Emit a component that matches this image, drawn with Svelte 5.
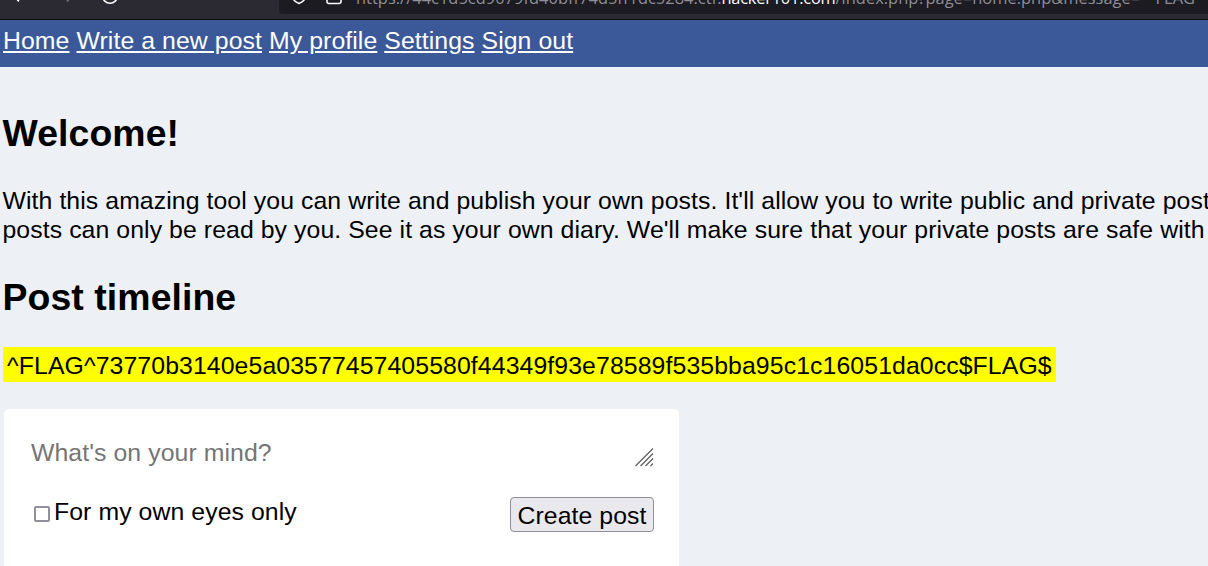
<script>
  const links = ['Home', 'Write a new post', 'My profile', 'Settings', 'Sign out'];
</script>

<div class="window">
  <header class="toolbar">
    <div class="buttons">
      <svg width="130" height="19" viewBox="0 0 130 19" fill="none" stroke-width="1.6">
        <path d="M10-8 15-2.500 19 1.300" stroke="#fbfbfe" />
        <path d="M71-8 71-2.500 67 1.300" stroke="#77757e" />
        <circle cx="110" cy="-4" r="7.300" stroke="#fbfbfe" />
      </svg>
    </div>
    <div class="address">
      <svg width="70" height="14" viewBox="0 0 70 14" fill="none" stroke="#fbfbfe" stroke-width="1.6">
        <path d="M13-6Q13 1 20 3.500Q27 1 27-6" />
        <rect x="48" y="-8" width="14" height="11.500" rx="2" />
      </svg>
      <div class="url">https://44c1d5cd9079fd40bff74d5ff1dc5284.ctf.<b>hacker101.com</b>/index.php?page=home.php&amp;message=<span class="caret">^</span>FLAG^</div>
    </div>
  </header>
  <nav>
    {#each links as label}<a href="#top">{label}</a>{/each}
  </nav>
  <main>
    <h2>Welcome!</h2>
    <p>With this amazing tool you can write and publish your own posts. It'll allow you to write public and private posts. Public<br />posts can only be read by you. See it as your own diary. We'll make sure that your private posts are safe with us.</p>
    <h2 class="timeline">Post timeline</h2>
    <div class="flag">^FLAG^73770b3140e5a03577457405580f44349f93e78589f535bba95c1c16051da0cc$FLAG$</div>
    <section class="composer">
      <div class="entry">
        <span>What's on your mind?</span>
        <svg width="19" height="19" viewBox="0 0 19 19" fill="none" stroke="#606060" stroke-width="1.3">
          <path d="M.5 18 18 .5M5.500 18 18 5.500M10.500 18 18 10.500M15.500 18 18 15.500" />
        </svg>
      </div>
      <div class="actions">
        <label><input type="checkbox" />For my own eyes only</label>
        <button>Create post</button>
      </div>
    </section>
  </main>
</div>

<style>
  :global(body) { margin: 0; overflow: hidden; background: #edf0f5; }
  .window {
    width: 1208px; height: 566px; overflow: hidden;
    font: 24.8px/29px "Liberation Sans", Arial, sans-serif; letter-spacing: 0.08px; color: #000;
  }
  .toolbar {
    display: flex; box-sizing: border-box; height: 20px; overflow: hidden;
    background: #2b2a33; border-bottom: 1px solid #0c0c0d;
  }
  .toolbar svg { display: block; flex: none; }
  .buttons { width: 279px; flex: none; }
  .address {
    display: flex; flex: 1; height: 14px; overflow: hidden;
    background: #1c1b22; border-bottom-left-radius: 4px;
  }
  .url {
    margin: -14px 0 0 7px; white-space: nowrap; color: #8f8e96; letter-spacing: 0.04px;
    font: 16.4px/23px "Open Sans", "Noto Sans", sans-serif;
  }
  .url b { font-weight: 400; color: #fbfbfe; letter-spacing: -0.22px; }
  .caret { letter-spacing: 6px; }
  nav {
    display: flex; gap: 7px; box-sizing: border-box; height: 47px;
    padding: 6px 3px; background: #3b5998;
  }
  nav a { color: #fff; text-decoration: underline; }
  main { padding: 44px 3px 0 2.5px; }
  h2 { margin: 0; font-size: 37.4px; line-height: 44px; font-weight: 700; }
  p { margin: 31px 0 0; white-space: nowrap; }
  .timeline { margin-top: 31px; }
  .flag {
    width: fit-content; margin: 28px 0 0 0.5px; padding: 4px 4px 2px;
    background: #ff0; white-space: nowrap; letter-spacing: 0.105px;
  }
  .composer {
    box-sizing: border-box; width: 675px; height: 200px; margin: 27px 0 0 1.5px;
    padding: 29px 25px 0 27px; background: #fff; border-radius: 5px;
  }
  .entry { display: flex; justify-content: space-between; color: #757575; }
  .entry svg { margin-top: 10px; }
  .actions { display: flex; justify-content: space-between; margin-top: 30px; }
  label { display: flex; }
  input {
    appearance: none; box-sizing: border-box; width: 16px; height: 16px;
    margin: 9px 4px 0 3px; border: 2px solid #8f8f9d; border-radius: 2px; background: #fff;
  }
  button {
    box-sizing: border-box; width: 144px; height: 35px; padding: 2px 0 0;
    border: 1px solid #8f8f9d; border-radius: 4px; background: #e9e9ed;
    font: inherit; letter-spacing: inherit; color: #000;
  }
</style>
